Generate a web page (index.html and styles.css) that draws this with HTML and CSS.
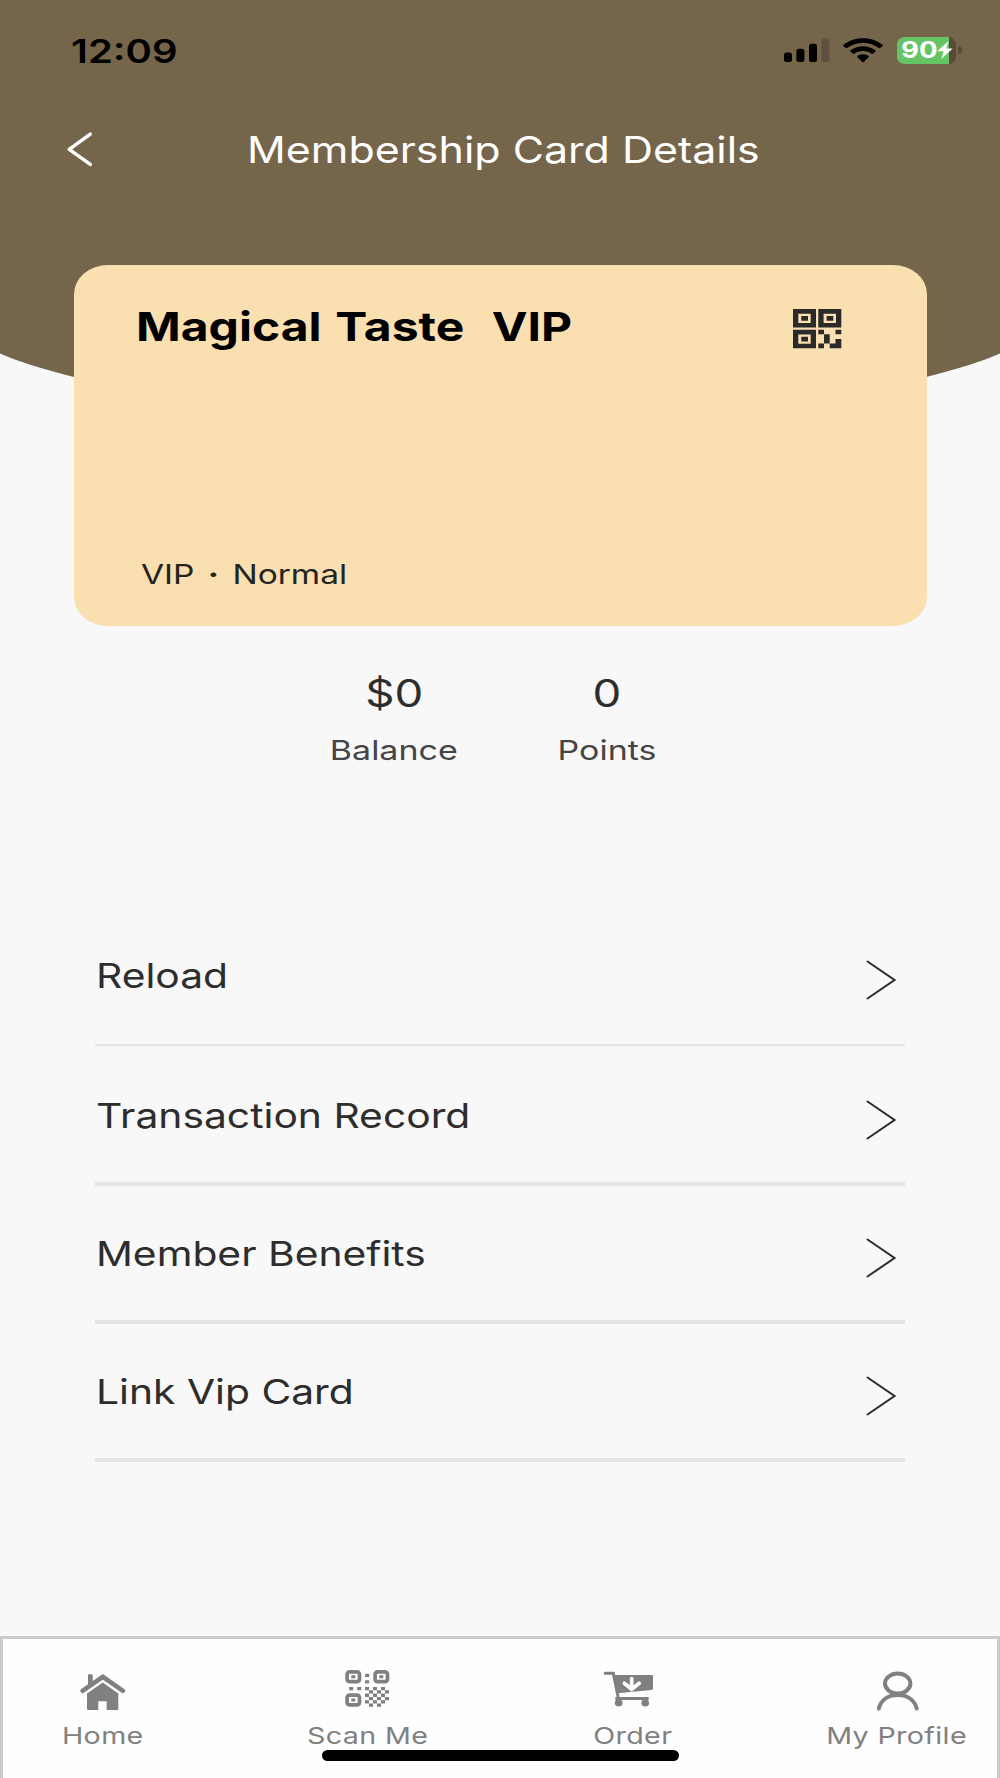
FILE: index.html
```
<!DOCTYPE html>
<html lang="en">
<head>
    <meta charset="UTF-8">
    <meta name="viewport" content="width=device-width, initial-scale=1.0">
    <title>Membership Card Details</title>
    <link rel="stylesheet" href="styles.css">
</head>
<body>
    <div class="screen">
        <header>
            <div class="status-bar">
                <span class="time wide">12:09</span>
                <div class="status-icons">
                    <svg class="signal" width="46" height="24" viewBox="0 0 46 24">
                        <rect x="0" y="14.5" width="8" height="9.5" rx="2.5"/>
                        <rect x="12.4" y="10.7" width="8" height="13.3" rx="2.5"/>
                        <rect x="25" y="5.7" width="8" height="18.3" rx="2.5"/>
                        <rect class="faded" x="37.4" y="0.5" width="8" height="23.5" rx="2.5"/>
                    </svg>
                    <svg class="wifi" width="40" height="25" viewBox="0 0 40 25">
                        <path d="M20 0.2C12.3 0.2 5.4 2.7 0.3 6.9Q-0.2 7.4 0.3 7.9L2.9 10.1Q3.5 10.5 4.1 10.1C8.4 6.7 13.9 4.9 20 4.9S31.6 6.7 35.9 10.1Q36.5 10.5 37.1 10.1L39.7 7.9Q40.2 7.4 39.7 6.9C34.6 2.7 27.7 0.2 20 0.2Z"/>
                        <path d="M20 8.3C14.9 8.3 10.6 10 7.4 12.6Q6.8 13.1 7.4 13.6L10.1 15.7Q10.7 16.1 11.3 15.7C13.7 13.9 16.7 12.9 20 12.9S26.3 13.9 28.7 15.7Q29.3 16.1 29.9 15.7L32.6 13.6Q33.2 13.1 32.6 12.6C29.4 10 25.1 8.3 20 8.3Z"/>
                        <path d="M20 16.3C17.7 16.3 15.8 17 14.4 18.1Q13.8 18.7 14.4 19.2L19.3 23.9Q20 24.5 20.7 23.9L25.6 19.2Q26.2 18.7 25.6 18.1C24.2 17 22.3 16.3 20 16.3Z"/>
                    </svg>
                    <div class="battery">
                        <span class="battery-level wide">90</span>
                        <svg class="bolt" width="16" height="18" viewBox="0 0 16 18">
                            <path d="M11.5 0L0.3 10.3H6.7L4.3 17.8L15.7 7.6H9.3Z"/>
                        </svg>
                    </div>
                </div>
            </div>
            <div class="title-bar">
                <a href="#" class="back">
                    <svg width="28" height="36" viewBox="0 0 28 36">
                        <path d="M24.3 3.2L3.2 18.4L24.3 33.4"/>
                    </svg>
                </a>
                <h1><span class="wide">Membership Card Details</span></h1>
            </div>
        </header>

        <main>
            <section class="card">
                <div class="card-top">
                    <h2 class="wide">Magical Taste&nbsp; VIP</h2>
                    <svg class="card-qr" width="49" height="40" viewBox="0 0 49 40">
                        <path fill-rule="evenodd" d="M0 0H23V18.5H0ZM5.3 4.7V14H17.7V4.7ZM8.3 7H15V11.7H8.3Z"/>
                        <path fill-rule="evenodd" d="M25.3 0H48.3V18.5H25.3ZM30.6 4.7V14H43V4.7ZM33.6 7H40.3V11.7H33.6Z"/>
                        <path fill-rule="evenodd" d="M0 20.7H23V39.2H0ZM5.3 25.4V34.7H17.7V25.4ZM8.3 27.7H15V32.4H8.3Z"/>
                        <path d="M25.3 20.7H31V25.3H36.7V34.6H31V39.2H25.3V34.6H31V25.3H25.3ZM42.5 20.7H48.3V25.3H42.5ZM42.5 30H48.3V39.2H36.7V34.6H42.5Z"/>
                    </svg>
                </div>
                <p class="card-level wide">VIP&nbsp; <b>·</b>&nbsp; Normal</p>
            </section>

            <section class="stats">
                <div class="stat">
                    <span class="stat-value wide">$0</span>
                    <span class="stat-label wide">Balance</span>
                </div>
                <div class="stat">
                    <span class="stat-value wide">0</span>
                    <span class="stat-label wide">Points</span>
                </div>
            </section>

            <ul class="menu">
                <li>
                    <span class="wide">Reload</span>
                    <svg class="arrow" width="30" height="40" viewBox="0 0 30 40"><path d="M1.5 1.5L28.5 20L1.5 38.5"/></svg>
                </li>
                <li>
                    <span class="wide">Transaction Record</span>
                    <svg class="arrow" width="30" height="40" viewBox="0 0 30 40"><path d="M1.5 1.5L28.5 20L1.5 38.5"/></svg>
                </li>
                <li>
                    <span class="wide">Member Benefits</span>
                    <svg class="arrow" width="30" height="40" viewBox="0 0 30 40"><path d="M1.5 1.5L28.5 20L1.5 38.5"/></svg>
                </li>
                <li>
                    <span class="wide">Link Vip Card</span>
                    <svg class="arrow" width="30" height="40" viewBox="0 0 30 40"><path d="M1.5 1.5L28.5 20L1.5 38.5"/></svg>
                </li>
            </ul>
        </main>

        <nav>
            <a href="#">
                <svg width="60" height="42" viewBox="0 0 60 42">
                    <path d="M15 16V5.3Q15 4.3 16 4.3H18.7Q19.7 4.3 19.7 5.3V13Z"/>
                    <path class="line" stroke-width="4.5" d="M9.5 20.8L29.8 6.8L50 20.8"/>
                    <path d="M29.8 12.5L45.3 23.5V39Q45.3 40 44.3 40H33.7V31.3H25.3V40H15Q14 40 14 39V23.5Z"/>
                </svg>
                <span class="wide">Home</span>
            </a>
            <a href="#">
                <svg width="60" height="42" viewBox="0 0 60 42">
                    <g class="finder">
                        <rect x="9.1" y="1.9" width="12.4" height="9.8" rx="2.5"/>
                        <rect x="37.1" y="1.9" width="12.4" height="9.8" rx="2.5"/>
                        <rect x="9.1" y="25.1" width="12.4" height="9.8" rx="2.5"/>
                    </g>
                    <path d="M13.3 5.3h4v3h-4ZM41.3 5.3h4v3h-4ZM13.3 28.5h4v3h-4ZM27 3.7h4.2v3.2h-4.2ZM27 10.2h4.2v3.2h-4.2ZM11.2 17h4v3.2h-4ZM19.2 17h4v3.2h-4Z"/>
                    <path d="M27 17h4v3.3h-4ZM35 17h4v3.3h-4ZM43 17h4v3.3h-4ZM31 20.3h4v3.3h-4ZM39 20.3h4v3.3h-4ZM47 20.3h4v3.3h-4ZM27 23.6h4v3.3h-4ZM35 23.6h4v3.3h-4ZM43 23.6h4v3.3h-4ZM31 26.9h4v3.3h-4ZM39 26.9h4v3.3h-4ZM47 26.9h4v3.3h-4ZM27 30.2h4v3.3h-4ZM35 30.2h4v3.3h-4ZM43 30.2h4v3.3h-4ZM31 33.5h4v3.3h-4ZM39 33.5h4v3.3h-4Z"/>
                </svg>
                <span class="wide">Scan Me</span>
            </a>
            <a href="#">
                <svg width="60" height="42" viewBox="0 0 60 42">
                    <path class="line" stroke-width="3" d="M3.2 3.3H11.3L16.3 28.3M14.5 28.6H45.5"/>
                    <path d="M12 5H49.5Q51 5 51 6.3V18.5Q51 19.8 49.5 20L15.5 23.2Z"/>
                    <ellipse cx="16.7" cy="33" rx="3.9" ry="3.4"/>
                    <ellipse cx="43.2" cy="33" rx="3.9" ry="3.4"/>
                    <path class="line down" d="M29.7 8.5V19M22.3 13.3L29.7 19.3L37.2 13.3"/>
                </svg>
                <span class="wide">Order</span>
            </a>
            <a href="#">
                <svg width="60" height="42" viewBox="0 0 60 42">
                    <ellipse class="line" stroke-width="4" cx="30.7" cy="13.6" rx="12.7" ry="10"/>
                    <path class="line" stroke-width="4" d="M11.8 38.5C14 30 21 25 30.7 25S47.5 30 49.7 38.5"/>
                </svg>
                <span class="wide">My Profile</span>
            </a>
            <div class="home-indicator"></div>
        </nav>
    </div>
</body>
</html>
```

FILE: styles.css
```
* {
    margin: 0;
    padding: 0;
    box-sizing: border-box;
}

body {
    font-family: Inter, 'Liberation Sans', sans-serif;
    background-color: #f8f8f8;
    color: #2d2d2d;
}

a {
    color: inherit;
    text-decoration: none;
}

svg {
    display: block;
}

/* extended letterforms */
.wide {
    display: inline-block;
    white-space: nowrap;
    transform: scaleX(1.2);
    transform-origin: left center;
}

.screen {
    position: relative;
    width: 1000px;
    height: 1778px;
    display: flex;
    flex-direction: column;
    overflow: hidden;
}

/* brown area with the curved bottom edge, behind the card */
.screen::before {
    content: '';
    position: absolute;
    top: 0;
    left: -50px;
    right: -50px;
    height: 417px;
    background: #75654a;
    border-radius: 0 0 50% 50% / 0 0 109px 109px;
}

header,
main {
    position: relative;
}

header {
    height: 265px;
}

.status-bar {
    height: 100px;
    padding: 0 38px 0 71px;
    display: flex;
    justify-content: space-between;
    align-items: center;
}

.time {
    margin-top: 3px;
    font-size: 32.5px;
    font-weight: 600;
    line-height: 40px;
    color: #000;
    transform: scaleX(1.23);
}

.status-icons {
    display: flex;
    align-items: center;
}

.signal {
    margin-right: 13px;
}

.faded {
    fill: #5e503c;
}

.wifi {
    margin-right: 14px;
}

.battery {
    position: relative;
    width: 59px;
    height: 27px;
    margin-right: 6px;
    padding-left: 4px;
    display: flex;
    align-items: center;
    border-radius: 8px / 7px;
    background: linear-gradient(to right, #65c466 52.5px, #594a3a 52.5px);
}

.battery::after {
    content: '';
    position: absolute;
    left: 61px;
    top: 9px;
    width: 4px;
    height: 8px;
    border-radius: 0 4px 4px 0;
    background: #594a3a;
}

.battery-level {
    width: 36px;
    font-size: 23px;
    font-weight: 700;
    color: #fff;
}

.bolt {
    fill: #fff;
}

.title-bar {
    height: 98px;
    display: flex;
    align-items: center;
    color: #fff;
}

.back {
    margin-left: 66px;
}

.back path {
    fill: none;
    stroke: #fff;
    stroke-width: 3.5;
    stroke-linecap: round;
    stroke-linejoin: round;
}

h1 {
    margin: 1px 0 0 153px;
    font-size: 36.5px;
    font-weight: 400;
}

h1 .wide {
    transform: scaleX(1.176);
}

.card {
    width: 853px;
    height: 361px;
    margin-left: 74px;
    padding: 35px 85px 0 62px;
    background: #fadfb1;
    border-radius: 34px / 29px;
}

.card-top {
    display: flex;
    justify-content: space-between;
    align-items: center;
    height: 54px;
}

h2 {
    margin-top: -1px;
    font-size: 40px;
    font-weight: 700;
    word-spacing: 2px;
    color: #000;
    transform: scaleX(1.208);
}

.card-qr {
    fill: #2a2a2a;
    margin-top: 4px;
}

.card-level {
    margin: 205px 0 0 5px;
    font-size: 27px;
    line-height: 32px;
    word-spacing: -2.2px;
    color: #25231d;
    transform: scaleX(1.24);
}

.stats {
    height: 282px;
    padding: 43px 0 0 294px;
    display: flex;
}

.stat {
    width: 200px;
    display: flex;
    flex-direction: column;
    align-items: center;
}

.stat + .stat {
    margin-left: 13px;
}

.stat .wide,
nav .wide {
    transform-origin: center;
}

.stat-value {
    font-size: 38px;
    line-height: 48px;
}

.stat-label {
    margin-top: 17px;
    font-size: 27.5px;
    line-height: 32px;
    color: #454545;
    transform: scaleX(1.235);
}

.menu {
    width: 810px;
    margin-left: 95px;
    list-style: none;
}

.menu li {
    height: 138px;
    padding-left: 1px;
    display: flex;
    justify-content: space-between;
    align-items: center;
    border-bottom: 4px solid #e4e4e4;
    font-size: 34px;
}

.menu li:first-child {
    padding-bottom: 2px;
    border-bottom-width: 2px;
}

.menu li:nth-child(2) {
    height: 140px;
    padding-top: 2px;
}

.arrow {
    margin: 9px 9px 0 0;
    fill: none;
    stroke: #2d2d2d;
    stroke-width: 2;
    stroke-linecap: round;
}

nav {
    position: relative;
    height: 142px;
    margin-top: auto;
    padding: 31px 32px 0;
    display: flex;
    justify-content: space-between;
    background: #fefefe;
    border: 3px solid #ccc;
    border-bottom: none;
    color: #808080;
}

nav a {
    width: 136px;
    display: flex;
    flex-direction: column;
    align-items: center;
}

nav svg {
    fill: #808080;
}

nav .line,
.finder {
    fill: none;
    stroke: #808080;
    stroke-linecap: round;
}

.finder {
    stroke-width: 3.7;
}

nav .down {
    stroke: #fefefe;
    stroke-width: 3.7;
}

nav span {
    margin-top: 10px;
    font-size: 23px;
    line-height: 28px;
    letter-spacing: 0.3px;
}

nav .wide {
    transform: scaleX(1.245);
}

.home-indicator {
    position: absolute;
    left: 319px;
    bottom: 17px;
    width: 357px;
    height: 11px;
    border-radius: 6px;
    background: #000;
}
```
